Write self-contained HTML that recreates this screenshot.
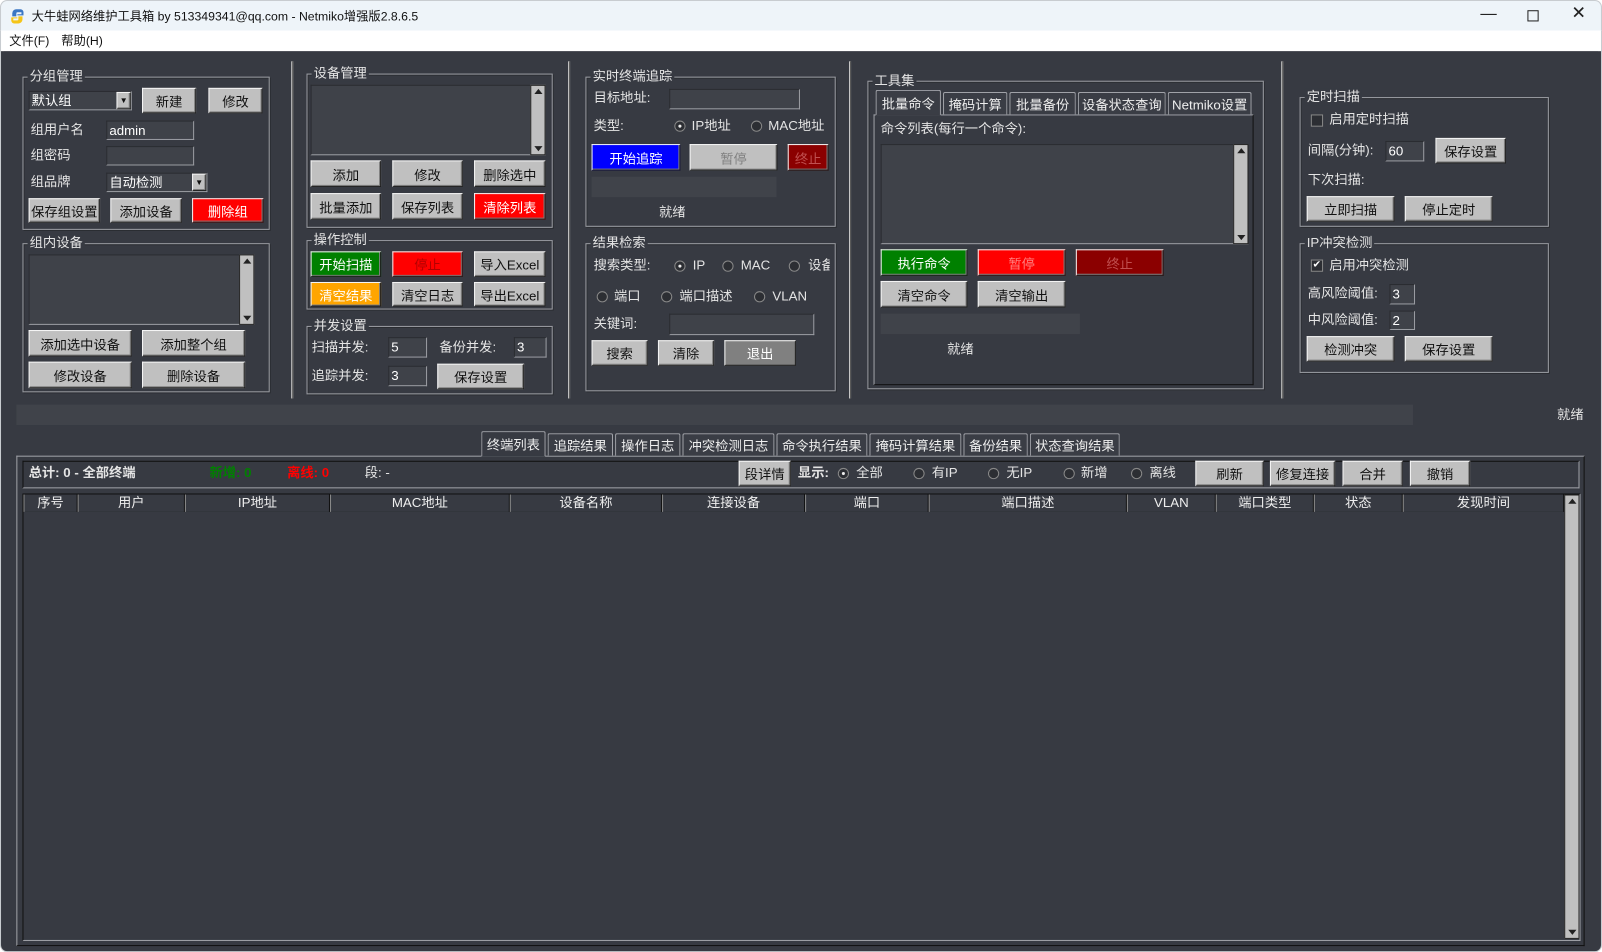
<!DOCTYPE html>
<html><head><meta charset="utf-8"><style>
*{box-sizing:border-box;margin:0;padding:0}
html,body{width:1602px;height:952px;overflow:hidden;background:#fff}
#w{position:absolute;left:0;top:0;width:1568px;height:932px;transform:scale(1.02168);transform-origin:0 0;font-family:"Liberation Sans","Noto Sans CJK SC",sans-serif;font-size:13px}
#tb{position:absolute;left:0;top:0;width:1568px;height:30px;background:#eef4f9;border:1px solid #c8ccd0;border-bottom:none;border-radius:7px 7px 0 0}
#mb{position:absolute;left:0;top:30px;width:1568px;height:20px;background:#fff;border-left:1px solid #c8ccd0;border-right:1px solid #c8ccd0}
#c{position:absolute;left:0;top:50px;width:1568px;height:882px;background:#373a42;border:1px solid #c8ccd0;border-top:none;border-radius:0 0 7px 7px}
.a{position:absolute}
.t{position:absolute;color:#e4e4e4;white-space:nowrap;line-height:16px}
.b{position:absolute;background:#c0c0c0;color:#111;border:1px solid;border-color:#f4f4f4 #202020 #202020 #f4f4f4;box-shadow:inset -1px -1px #808080;display:flex;align-items:center;justify-content:center;white-space:nowrap}
.g{position:absolute;border:1px solid #9a9ca2;box-shadow:inset 1px 1px #2a2c31,1px 1px #2a2c31}
.gt{position:absolute;top:-9px;left:4px;background:#373a42;color:#e4e4e4;padding:0 2px;line-height:16px;white-space:nowrap}
.f{position:absolute;background:#3f4249;border:1px solid;border-color:#2a2c31 #9a9ca2 #9a9ca2 #2a2c31;color:#fff;padding-left:2px;line-height:17px}
.bar{position:absolute;background:#40434a}
.sb{position:absolute;background:#c0c0c0;border:1px solid #222;width:15px}
.sb:before,.sb:after{content:"";position:absolute;left:3px;border-left:4px solid transparent;border-right:4px solid transparent}
.sb:before{top:3px;border-bottom:5px solid #222}
.sb:after{bottom:3px;border-top:5px solid #222}
.r{position:absolute;width:11px;height:11px;border-radius:50%;border:1px solid #888;background:#2c2e33}
.r.on:after{content:"";position:absolute;left:3px;top:3px;width:3px;height:3px;border-radius:50%;background:#eee}
.vl{position:absolute;width:2px;background:#c8c8c8;border-right:1px solid #555}
.tab{position:absolute;background:#3a3d45;border:1px solid #a0a2a8;border-bottom:none;color:#eee;display:flex;align-items:center;justify-content:center;white-space:nowrap;border-radius:2px 2px 0 0}
.th{position:absolute;top:0;height:17px;border-right:1px solid #111;border-left:1px solid #888;color:#eee;text-align:center;line-height:16px;background:#373a42}
</style></head><body><div id="w">
<div id="tb">
<svg class="a" style="left:8px;top:7px" width="16" height="16" viewBox="0 0 16 16"><path d="M7 1h4a3 3 0 0 1 3 3v3H8V6h4V4H8a1 1 0 0 0-1 1v3H3V5a4 4 0 0 1 4-4z" fill="#3b77c4"/><path d="M9 15H5a3 3 0 0 1-3-3V9h6v1H4v2h4a1 1 0 0 0 1-1V8h4v3a4 4 0 0 1-4 4z" fill="#f5c518"/></svg>
<div class="t" style="left:30px;top:7px;color:#111;font-size:12px">大牛蛙网络维护工具箱 by 513349341@qq.com - Netmiko增强版2.8.6.5</div>
<div class="t" style="left:1448px;top:5px;color:#222;font-size:16px">—</div>
<div class="a" style="left:1494px;top:9px;width:11px;height:11px;border:1px solid #222"></div>
<div class="t" style="left:1537px;top:4px;color:#222;font-size:17px">✕</div>
</div>
<div id="mb"><div class="t" style="left:8px;top:2px;color:#111;font-size:12px">文件(F)</div><div class="t" style="left:59px;top:2px;color:#111;font-size:12px">帮助(H)</div></div>
<div id="c"></div>

<!-- vertical separators -->
<div class="vl" style="left:285px;top:60px;height:330px"></div>
<div class="vl" style="left:556px;top:60px;height:330px"></div>
<div class="vl" style="left:831px;top:60px;height:330px"></div>
<div class="vl" style="left:1254px;top:60px;height:330px"></div>

<!-- 分组管理 -->
<div class="g" style="left:22px;top:75px;width:242px;height:150px"><div class="gt">分组管理</div></div>
<div class="f" style="left:28px;top:89px;width:101px;height:19px;color:#fff">默认组</div>
<div class="b" style="left:114px;top:90px;width:14px;height:17px;font-size:8px">▼</div>
<div class="b" style="left:139px;top:86px;width:53px;height:25px">新建</div>
<div class="b" style="left:204px;top:86px;width:53px;height:25px">修改</div>
<div class="t" style="left:30px;top:119px">组用户名</div>
<div class="f" style="left:104px;top:118px;width:86px;height:19px">admin</div>
<div class="t" style="left:30px;top:144px">组密码</div>
<div class="f" style="left:104px;top:143px;width:86px;height:19px"></div>
<div class="t" style="left:30px;top:170px">组品牌</div>
<div class="f" style="left:104px;top:169px;width:99px;height:19px">自动检测</div>
<div class="b" style="left:188px;top:170px;width:14px;height:17px;font-size:8px">▼</div>
<div class="b" style="left:28px;top:194px;width:70px;height:24px">保存组设置</div>
<div class="b" style="left:108px;top:194px;width:70px;height:24px">添加设备</div>
<div class="b" style="left:188px;top:194px;width:70px;height:24px;background:#f00;color:#fff">删除组</div>

<!-- 组内设备 -->
<div class="g" style="left:22px;top:238px;width:242px;height:146px"><div class="gt">组内设备</div></div>
<div class="f" style="left:28px;top:249px;width:221px;height:69px"></div>
<div class="sb" style="left:234px;top:249px;height:69px"></div>
<div class="b" style="left:28px;top:323px;width:101px;height:26px">添加选中设备</div>
<div class="b" style="left:139px;top:323px;width:101px;height:26px">添加整个组</div>
<div class="b" style="left:28px;top:354px;width:101px;height:26px">修改设备</div>
<div class="b" style="left:139px;top:354px;width:101px;height:26px">删除设备</div>

<!-- 设备管理 -->
<div class="g" style="left:300px;top:72px;width:241px;height:151px"><div class="gt">设备管理</div></div>
<div class="f" style="left:304px;top:83px;width:230px;height:69px"></div>
<div class="sb" style="left:519px;top:83px;height:69px"></div>
<div class="b" style="left:304px;top:157px;width:69px;height:26px">添加</div>
<div class="b" style="left:384px;top:157px;width:69px;height:26px">修改</div>
<div class="b" style="left:464px;top:157px;width:70px;height:26px">删除选中</div>
<div class="b" style="left:304px;top:189px;width:69px;height:26px">批量添加</div>
<div class="b" style="left:384px;top:189px;width:69px;height:26px">保存列表</div>
<div class="b" style="left:464px;top:189px;width:70px;height:26px;background:#f00;color:#fff">清除列表</div>

<!-- 操作控制 -->
<div class="g" style="left:300px;top:235px;width:241px;height:68px"><div class="gt">操作控制</div></div>
<div class="b" style="left:304px;top:246px;width:69px;height:25px;background:#008000;color:#fff">开始扫描</div>
<div class="b" style="left:384px;top:246px;width:69px;height:25px;background:#f00;color:#b30000">停止</div>
<div class="b" style="left:464px;top:246px;width:70px;height:25px">导入Excel</div>
<div class="b" style="left:304px;top:276px;width:69px;height:24px;background:#ffa500;color:#fff">清空结果</div>
<div class="b" style="left:384px;top:276px;width:69px;height:24px">清空日志</div>
<div class="b" style="left:464px;top:276px;width:70px;height:24px">导出Excel</div>

<!-- 并发设置 -->
<div class="g" style="left:300px;top:319px;width:241px;height:67px"><div class="gt">并发设置</div></div>
<div class="t" style="left:305px;top:332px">扫描并发:</div>
<div class="f" style="left:380px;top:330px;width:38px;height:20px">5</div>
<div class="t" style="left:430px;top:332px">备份并发:</div>
<div class="f" style="left:503px;top:330px;width:32px;height:20px">3</div>
<div class="t" style="left:305px;top:360px">追踪并发:</div>
<div class="f" style="left:380px;top:358px;width:38px;height:20px">3</div>
<div class="b" style="left:428px;top:356px;width:85px;height:25px">保存设置</div>

<!-- 实时终端追踪 -->
<div class="g" style="left:573px;top:75px;width:245px;height:147px"><div class="gt">实时终端追踪</div></div>
<div class="t" style="left:581px;top:88px">目标地址:</div>
<div class="f" style="left:655px;top:87px;width:128px;height:20px"></div>
<div class="t" style="left:581px;top:115px">类型:</div>
<div class="r on" style="left:660px;top:118px"></div><div class="t" style="left:677px;top:115px">IP地址</div>
<div class="r" style="left:735px;top:118px"></div><div class="t" style="left:752px;top:115px">MAC地址</div>
<div class="b" style="left:579px;top:141px;width:87px;height:26px;background:#0000ff;color:#fff">开始追踪</div>
<div class="b" style="left:675px;top:141px;width:86px;height:26px;color:#808080">暂停</div>
<div class="b" style="left:771px;top:141px;width:40px;height:26px;background:#8b0000;color:#c05050">终止</div>
<div class="bar" style="left:579px;top:173px;width:181px;height:20px"></div>
<div class="t" style="left:645px;top:200px">就绪</div>

<!-- 结果检索 -->
<div class="g" style="left:573px;top:238px;width:245px;height:145px"><div class="gt">结果检索</div></div>
<div class="t" style="left:581px;top:252px">搜索类型:</div>
<div class="r on" style="left:660px;top:255px"></div><div class="t" style="left:678px;top:252px">IP</div>
<div class="r" style="left:707px;top:255px"></div><div class="t" style="left:725px;top:252px">MAC</div>
<div class="r" style="left:772px;top:255px"></div><div class="t" style="left:791px;top:252px;width:21px;overflow:hidden">设备</div>
<div class="r" style="left:584px;top:285px"></div><div class="t" style="left:601px;top:282px">端口</div>
<div class="r" style="left:647px;top:285px"></div><div class="t" style="left:665px;top:282px">端口描述</div>
<div class="r" style="left:738px;top:285px"></div><div class="t" style="left:756px;top:282px">VLAN</div>
<div class="t" style="left:581px;top:309px">关键词:</div>
<div class="f" style="left:655px;top:307px;width:142px;height:21px"></div>
<div class="b" style="left:579px;top:333px;width:55px;height:25px">搜索</div>
<div class="b" style="left:644px;top:333px;width:55px;height:25px">清除</div>
<div class="b" style="left:709px;top:333px;width:70px;height:25px;background:#808080;color:#fff">退出</div>

<!-- 工具集 -->
<div class="g" style="left:849px;top:79px;width:388px;height:302px"><div class="gt">工具集</div></div>
<div class="a" style="left:855px;top:112px;width:372px;height:265px;border:1px solid #a0a2a8;border-right-color:#111;border-bottom-color:#111"></div>
<div class="tab" style="left:857px;top:88px;width:64px;height:25px;border-bottom:1px solid #3a3d45">批量命令</div>
<div class="tab" style="left:923px;top:90px;width:63px;height:22px">掩码计算</div>
<div class="tab" style="left:988px;top:90px;width:65px;height:22px">批量备份</div>
<div class="tab" style="left:1055px;top:90px;width:86px;height:22px">设备状态查询</div>
<div class="tab" style="left:1143px;top:90px;width:82px;height:22px">Netmiko设置</div>
<div class="t" style="left:862px;top:118px">命令列表(每行一个命令):</div>
<div class="f" style="left:862px;top:141px;width:360px;height:98px"></div>
<div class="sb" style="left:1207px;top:141px;height:98px"></div>
<div class="b" style="left:862px;top:244px;width:85px;height:26px;background:#008000;color:#fff">执行命令</div>
<div class="b" style="left:957px;top:244px;width:86px;height:26px;background:#f00;color:#ff8080">暂停</div>
<div class="b" style="left:1053px;top:244px;width:86px;height:26px;background:#8b0000;color:#c05050">终止</div>
<div class="b" style="left:862px;top:275px;width:85px;height:26px">清空命令</div>
<div class="b" style="left:957px;top:275px;width:86px;height:26px">清空输出</div>
<div class="bar" style="left:862px;top:307px;width:195px;height:20px"></div>
<div class="t" style="left:927px;top:334px">就绪</div>

<!-- 定时扫描 -->
<div class="g" style="left:1272px;top:95px;width:244px;height:127px"><div class="gt">定时扫描</div></div>
<div class="a" style="left:1283px;top:112px;width:12px;height:12px;border:1px solid #888;background:#2c2e33"></div>
<div class="t" style="left:1301px;top:109px">启用定时扫描</div>
<div class="t" style="left:1280px;top:139px">间隔(分钟):</div>
<div class="f" style="left:1356px;top:138px;width:38px;height:20px">60</div>
<div class="b" style="left:1405px;top:135px;width:69px;height:25px">保存设置</div>
<div class="t" style="left:1280px;top:168px">下次扫描:</div>
<div class="b" style="left:1279px;top:192px;width:86px;height:25px">立即扫描</div>
<div class="b" style="left:1375px;top:192px;width:86px;height:25px">停止定时</div>

<!-- IP冲突检测 -->
<div class="g" style="left:1272px;top:238px;width:244px;height:127px"><div class="gt">IP冲突检测</div></div>
<div class="a" style="left:1283px;top:254px;width:12px;height:12px;border:1px solid #888;background:#2c2e33;color:#fff;font-size:10px;line-height:10px;text-align:center">✔</div>
<div class="t" style="left:1301px;top:252px">启用冲突检测</div>
<div class="t" style="left:1280px;top:279px">高风险阈值:</div>
<div class="f" style="left:1360px;top:278px;width:25px;height:20px">3</div>
<div class="t" style="left:1280px;top:305px">中风险阈值:</div>
<div class="f" style="left:1360px;top:304px;width:25px;height:19px">2</div>
<div class="b" style="left:1279px;top:329px;width:86px;height:25px">检测冲突</div>
<div class="b" style="left:1375px;top:329px;width:86px;height:25px">保存设置</div>

<!-- status -->
<div class="bar" style="left:16px;top:396px;width:1367px;height:20px"></div>
<div class="t" style="left:1524px;top:398px">就绪</div>

<!-- bottom tabs -->
<div class="a" style="left:16px;top:446px;width:1535px;height:480px;border:1px solid #a0a2a8;border-right-color:#111;border-bottom-color:#111"></div>
<div class="tab" style="left:471px;top:422px;width:63px;height:25px;border-bottom:1px solid #373a42;background:#373a42">终端列表</div>
<div class="tab" style="left:536px;top:424px;width:64px;height:22px">追踪结果</div>
<div class="tab" style="left:602px;top:424px;width:64px;height:22px">操作日志</div>
<div class="tab" style="left:668px;top:424px;width:90px;height:22px">冲突检测日志</div>
<div class="tab" style="left:760px;top:424px;width:89px;height:22px">命令执行结果</div>
<div class="tab" style="left:851px;top:424px;width:90px;height:22px">掩码计算结果</div>
<div class="tab" style="left:943px;top:424px;width:63px;height:22px">备份结果</div>
<div class="tab" style="left:1008px;top:424px;width:88px;height:22px">状态查询结果</div>

<div class="a" style="left:22px;top:451px;width:1524px;height:27px;border:1px solid #a0a2a8;border-top-color:#111;border-left-color:#111"></div>
<div class="t" style="left:28px;top:455px;font-weight:bold">总计: 0 - 全部终端</div>
<div class="t" style="left:205px;top:455px;color:#008000;font-weight:bold">新增: 0</div>
<div class="t" style="left:281px;top:455px;color:#f00;font-weight:bold">离线: 0</div>
<div class="t" style="left:357px;top:455px">段: -</div>
<div class="b" style="left:723px;top:451px;width:51px;height:25px">段详情</div>
<div class="t" style="left:781px;top:455px;font-weight:bold">显示:</div>
<div class="r on" style="left:820px;top:458px"></div><div class="t" style="left:838px;top:455px">全部</div>
<div class="r" style="left:894px;top:458px"></div><div class="t" style="left:912px;top:455px">有IP</div>
<div class="r" style="left:967px;top:458px"></div><div class="t" style="left:985px;top:455px">无IP</div>
<div class="r" style="left:1041px;top:458px"></div><div class="t" style="left:1058px;top:455px">新增</div>
<div class="r" style="left:1107px;top:458px"></div><div class="t" style="left:1125px;top:455px">离线</div>
<div class="b" style="left:1170px;top:451px;width:67px;height:25px">刷新</div>
<div class="b" style="left:1243px;top:451px;width:64px;height:25px">修复连接</div>
<div class="b" style="left:1314px;top:451px;width:59px;height:25px">合并</div>
<div class="b" style="left:1380px;top:451px;width:59px;height:25px">撤销</div>

<div class="a" style="left:22px;top:483px;width:1525px;height:438px;border:1px solid #111;border-right-color:#a0a2a8;border-bottom-color:#a0a2a8;background:#373a42">
<div class="a" style="left:0;top:0;width:1508px;height:17px;border-bottom:1px solid #111">
<div class="th" style="left:0;width:53px">序号</div>
<div class="th" style="left:53px;width:105px">用户</div>
<div class="th" style="left:158px;width:142px">IP地址</div>
<div class="th" style="left:300px;width:176px">MAC地址</div>
<div class="th" style="left:476px;width:149px">设备名称</div>
<div class="th" style="left:625px;width:140px">连接设备</div>
<div class="th" style="left:765px;width:121px">端口</div>
<div class="th" style="left:886px;width:194px">端口描述</div>
<div class="th" style="left:1080px;width:87px">VLAN</div>
<div class="th" style="left:1167px;width:96px">端口类型</div>
<div class="th" style="left:1263px;width:87px">状态</div>
<div class="th" style="left:1350px;width:158px">发现时间</div>
</div>
<div class="sb" style="left:1508px;top:0;height:435px"></div>
</div>
</div></body></html>
